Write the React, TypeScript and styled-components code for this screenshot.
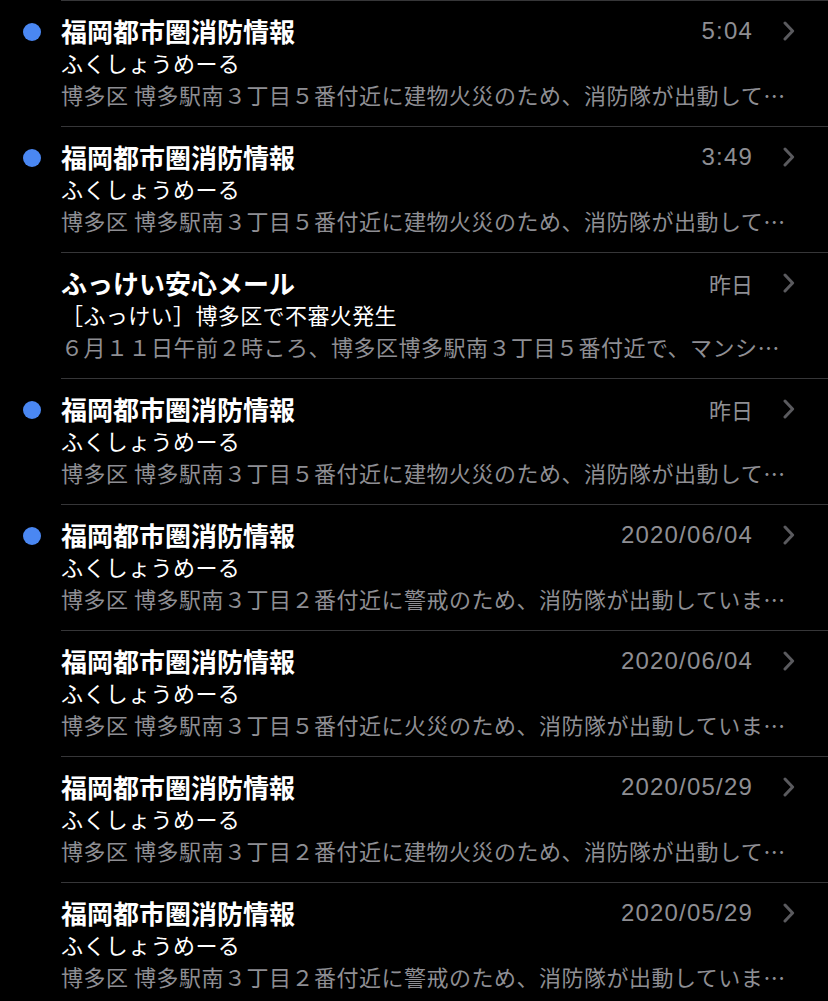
import React from "react";
import styled, { createGlobalStyle } from "styled-components";

const GlobalStyle = createGlobalStyle`
  html, body {
    margin: 0;
    padding: 0;
    background: #000;
  }
  body {
    font-family: "Noto Sans CJK JP", "Noto Sans", sans-serif;
    -webkit-font-smoothing: antialiased;
  }
`;

const List = styled.div`
  display: flex;
  flex-direction: column;
  width: 828px;
  background: #000;
`;

const Row = styled.div`
  display: flex;
  height: 126px;
`;

const DotCol = styled.div`
  width: 61px;
  flex: none;
  display: flex;
  justify-content: flex-start;
  align-items: flex-start;
`;

const UnreadDot = styled.span<{ $show: boolean }>`
  display: block;
  width: 18px;
  height: 18px;
  margin: 23px 0 0 23px;
  border-radius: 50%;
  background: ${(p) => (p.$show ? "#4a87f2" : "transparent")};
`;

const Content = styled.div`
  flex: 1;
  min-width: 0;
  display: flex;
  flex-direction: column;
  border-top: 1px solid #363638;
  padding: 15px 33px 0 0;
`;

const TopLine = styled.div`
  display: flex;
  align-items: center;
  height: 30px;
`;

const Sender = styled.div`
  flex: 1;
  min-width: 0;
  color: #fff;
  font-family: "Noto Sans CJK JP", sans-serif;
  font-weight: 700;
  font-size: 26px;
  line-height: 30px;
  white-space: nowrap;
`;

const Time = styled.div<{ $cjk: boolean }>`
  color: #8e8e93;
  font-family: ${(p) =>
    p.$cjk ? `"Noto Sans CJK JP", sans-serif` : `"Liberation Sans", Arial, sans-serif`};
  font-size: ${(p) => (p.$cjk ? "22px" : "24px")};
  letter-spacing: ${(p) => (p.$cjk ? "0" : "1.2px")};
  line-height: 30px;
  margin-right: 30px;
  white-space: nowrap;
`;

const Chevron = styled.svg`
  width: 12px;
  height: 20px;
  flex: none;
`;

const Subject = styled.div`
  color: #fff;
  font-family: "Noto Sans CJK JP", sans-serif;
  font-size: 22px;
  letter-spacing: 0.4px;
  line-height: 33px;
  white-space: nowrap;
  overflow: hidden;
  text-overflow: ellipsis;
`;

const Preview = styled.div`
  color: #8e8e93;
  font-family: "Noto Sans CJK JP", sans-serif;
  font-size: 22px;
  letter-spacing: 0.5px;
  line-height: 30px;
  margin-right: 3px;
  white-space: nowrap;
  overflow: hidden;
  text-overflow: ellipsis;
`;

type Mail = {
  unread: boolean;
  sender: string;
  time: string;
  subject: string;
  preview: string;
};

const FIRE = "福岡都市圏消防情報";
const SUB = "ふくしょうめーる";

const mails: Mail[] = [
  { unread: true, sender: FIRE, time: "5:04", subject: SUB, preview: "博多区 博多駅南３丁目５番付近に建物火災のため、消防隊が出動して…" },
  { unread: true, sender: FIRE, time: "3:49", subject: SUB, preview: "博多区 博多駅南３丁目５番付近に建物火災のため、消防隊が出動して…" },
  { unread: false, sender: "ふっけい安心メール", time: "昨日", subject: "［ふっけい］博多区で不審火発生", preview: "６月１１日午前２時ころ、博多区博多駅南３丁目５番付近で、マンシ…" },
  { unread: true, sender: FIRE, time: "昨日", subject: SUB, preview: "博多区 博多駅南３丁目５番付近に建物火災のため、消防隊が出動して…" },
  { unread: true, sender: FIRE, time: "2020/06/04", subject: SUB, preview: "博多区 博多駅南３丁目２番付近に警戒のため、消防隊が出動していま…" },
  { unread: false, sender: FIRE, time: "2020/06/04", subject: SUB, preview: "博多区 博多駅南３丁目５番付近に火災のため、消防隊が出動していま…" },
  { unread: false, sender: FIRE, time: "2020/05/29", subject: SUB, preview: "博多区 博多駅南３丁目２番付近に建物火災のため、消防隊が出動して…" },
  { unread: false, sender: FIRE, time: "2020/05/29", subject: SUB, preview: "博多区 博多駅南３丁目２番付近に警戒のため、消防隊が出動していま…" },
];

const ChevronIcon = () => (
  <Chevron viewBox="0 0 12 20" aria-hidden="true">
    <polyline
      points="2,2 9.6,10 2,18"
      fill="none"
      stroke="#5a5a5e"
      strokeWidth="3"
      strokeLinecap="round"
      strokeLinejoin="round"
    />
  </Chevron>
);

export default function App() {
  return (
    <>
      <GlobalStyle />
      <List>
        {mails.map((m, i) => (
          <Row key={i}>
            <DotCol>
              <UnreadDot $show={m.unread} />
            </DotCol>
            <Content>
              <TopLine>
                <Sender>{m.sender}</Sender>
                <Time $cjk={/[^\d:/]/.test(m.time)}>{m.time}</Time>
                <ChevronIcon />
              </TopLine>
              <Subject>{m.subject}</Subject>
              <Preview>{m.preview}</Preview>
            </Content>
          </Row>
        ))}
      </List>
    </>
  );
}
